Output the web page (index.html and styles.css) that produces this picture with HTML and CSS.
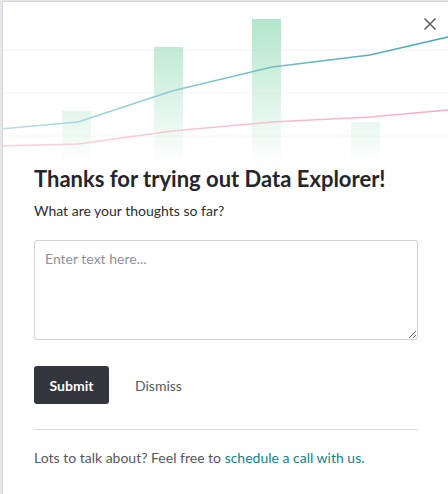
FILE: index.html
```html
<!DOCTYPE html>
<html>
<head>
<meta charset="utf-8">
<link rel="stylesheet" href="styles.css">
</head>
<body>
<div class="modal">
  <div class="chart">
    <svg class="chart-svg" width="445" height="160" viewBox="0 0 445 160">
      <defs>
        <linearGradient id="barGrad" gradientUnits="userSpaceOnUse" x1="0" y1="0" x2="0" y2="162">
          <stop offset="0" stop-color="#a9e3c4"/>
          <stop offset="1" stop-color="#a9e3c4" stop-opacity="0"/>
        </linearGradient>
        <linearGradient id="tealGrad" gradientUnits="userSpaceOnUse" x1="0" y1="0" x2="445" y2="0">
          <stop offset="0" stop-color="#b5dfe3"/>
          <stop offset="1" stop-color="#45a5af"/>
        </linearGradient>
        <linearGradient id="pinkGrad" gradientUnits="userSpaceOnUse" x1="0" y1="0" x2="445" y2="0">
          <stop offset="0" stop-color="#fbd3dc"/>
          <stop offset="1" stop-color="#f8adc0"/>
        </linearGradient>
      </defs>
      <line x1="0" y1="48" x2="445" y2="48" stroke="#f1f1f3" stroke-width="1"/>
      <line x1="0" y1="91" x2="445" y2="91" stroke="#f4f4f6" stroke-width="1"/>
      <line x1="0" y1="134" x2="445" y2="134" stroke="#f6f6f8" stroke-width="1"/>
      <rect x="59" y="109" width="29" height="53" fill="url(#barGrad)"/>
      <rect x="151" y="45" width="29" height="117" fill="url(#barGrad)"/>
      <rect x="249" y="17" width="29" height="145" fill="url(#barGrad)"/>
      <rect x="348" y="120" width="29" height="42" fill="url(#barGrad)"/>
      <polyline points="-3,144 75,142 169,129 269,120 367,115 445,108" fill="none" stroke="url(#pinkGrad)" stroke-width="1.6"/>
      <polyline points="-3,127 75,120 169,89 269,65 367,53 445,35" fill="none" stroke="url(#tealGrad)" stroke-width="1.6"/>
    </svg>
    <button class="close" aria-label="Close">
      <svg width="12" height="12" viewBox="0 0 12 12"><path d="M0.5 0.5 L11.5 11.5 M11.5 0.5 L0.5 11.5" stroke="#5a5d66" stroke-width="1.5" fill="none"/></svg>
    </button>
  </div>
  <div class="content">
    <h1 class="title">Thanks for trying out Data Explorer!</h1>
    <p class="question">What are your thoughts so far?</p>
    <textarea class="input" placeholder="Enter text here..."></textarea>
    <div class="actions">
      <button class="btn-submit">Submit</button>
      <button class="btn-dismiss">Dismiss</button>
    </div>
    <hr class="divider">
    <p class="footer">Lots to talk about? Feel free to <a class="link" href="#">schedule a call with us.</a></p>
  </div>
</div>
</body>
</html>
```
FILE: styles.css
```css
html, body {
  margin: 0;
  padding: 0;
  height: 100%;
}
body {
  background: #e6e6eb;
  font-family: "Lato", "Liberation Sans", sans-serif;
  overflow: hidden;
}
.modal {
  margin: 1px 0 0 2px;
  background: #fff;
  border-left: 1px solid #d6d6dc;
  border-top: 1px solid #d6d6dc;
  height: 500px;
}
.chart {
  position: relative;
  height: 160px;
}
.chart-svg {
  display: block;
}
.close {
  position: absolute;
  top: 14px;
  right: 10px;
  width: 16px;
  height: 16px;
  padding: 0;
  border: 0;
  background: transparent;
  display: flex;
  align-items: center;
  justify-content: center;
}
.content {
  padding: 0 30px 0 31px;
}
.title {
  margin: 2px 0 0 0;
  font-size: 22px;
  font-weight: 700;
  color: #24262b;
  line-height: 30px;
}
.question {
  margin: 7px 0 0 0;
  font-size: 14px;
  color: #2b2d33;
  line-height: 20px;
}
.input {
  display: block;
  box-sizing: border-box;
  margin-top: 19px;
  width: 384px;
  height: 100px;
  border: 1px solid #cfd0da;
  border-radius: 3px;
  padding: 9px 10px;
  font-family: inherit;
  font-size: 14px;
  resize: vertical;
}
.input::placeholder {
  color: #8f9197;
}
.actions {
  display: flex;
  align-items: center;
  gap: 26px;
  margin-top: 26px;
}
.btn-submit {
  width: 75px;
  height: 38px;
  background: #33363d;
  color: #fff;
  border: 0;
  border-radius: 3px;
  font-family: inherit;
  font-size: 14px;
  font-weight: 700;
}
.btn-dismiss {
  background: transparent;
  border: 0;
  padding: 0;
  font-family: inherit;
  font-size: 14px;
  color: #55585f;
}
.divider {
  margin: 25px 0 0 0;
  width: 384px;
  border: 0;
  border-top: 1px solid #dcdce2;
}
.footer {
  margin: 18px 0 0 0;
  font-size: 14px;
  color: #55585f;
  line-height: 20px;
}
.link {
  color: #16808c;
  text-decoration: none;
}
```
